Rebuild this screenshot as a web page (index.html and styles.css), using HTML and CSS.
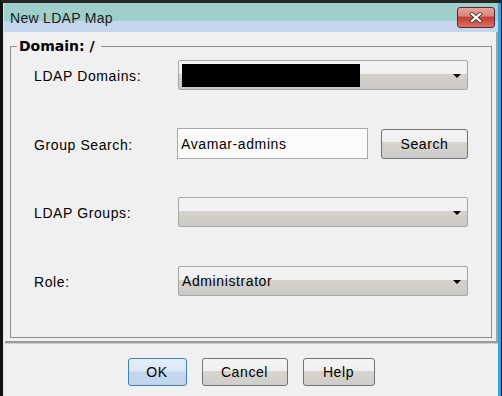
FILE: index.html
```html
<!DOCTYPE html>
<html lang="en">
<head>
    <meta charset="UTF-8">
    <title>New LDAP Map</title>
    <link rel="stylesheet" href="styles.css">
</head>
<body>
    <div class="window">
        <div class="frame">
            <div class="titlebar">
                <span class="title">New LDAP Map</span>
                <div class="close">
                    <svg width="14" height="11" viewBox="0 0 14 11">
                        <path d="M3 2 L11 9 M11 2 L3 9" stroke="#5a3a3a" stroke-width="4" stroke-linecap="square"/>
                        <path d="M3 2 L11 9 M11 2 L3 9" stroke="#ffffff" stroke-width="2.2" stroke-linecap="square"/>
                    </svg>
                </div>
            </div>

            <div class="panel">
                <fieldset class="group">
                    <legend>Domain: /</legend>
                    <div class="form">
                        <span class="label">LDAP Domains:</span>
                        <div class="combo">
                            <span class="redacted"></span>
                            <span class="arrow"></span>
                        </div>

                        <span class="label">Group Search:</span>
                        <div class="search-row">
                            <div class="field">Avamar-admins</div>
                            <div class="btn btn-search">Search</div>
                        </div>

                        <span class="label">LDAP Groups:</span>
                        <div class="combo">
                            <span class="arrow"></span>
                        </div>

                        <span class="label">Role:</span>
                        <div class="combo">
                            <span class="combo-text">Administrator</span>
                            <span class="arrow"></span>
                        </div>
                    </div>
                </fieldset>
            </div>

            <div class="actions">
                <div class="btn btn-ok">OK</div>
                <div class="btn btn-cancel">Cancel</div>
                <div class="btn btn-help">Help</div>
            </div>
        </div>
    </div>
</body>
</html>
```

FILE: styles.css
```css
* {
    box-sizing: border-box;
}

body {
    margin: 0;
    background-color: #111;
    font-family: 'Liberation Sans', Arial, sans-serif;
    font-size: 14px;
    color: #000;
}

.window {
    width: 502px;
    height: 396px;
    border-top: 3px solid #262626;
    border-left: 3px solid #111;
    border-right: 1px solid #111;
    display: flex;
    flex-direction: column;
}

.frame {
    flex: 1;
    display: flex;
    flex-direction: column;
    background-color: #f0f0f0;
    border-left: 1px solid #d9e4f2;
    border-right: 3px solid #3aa0da;
}

/* title bar */
.titlebar {
    height: 29px;
    display: flex;
    justify-content: space-between;
    padding-left: 6px;
    background: linear-gradient(#9ecfcb 0, #9ecfcb 18px, #c5d5ee 18px, #c5d5ee 100%);
}

.title {
    align-self: center;
    font-size: 14px;
    letter-spacing: 0.3px;
    color: #1a1a1a;
}

.close {
    width: 38px;
    height: 21px;
    margin-top: 4px;
    margin-right: 3px;
    border: 1px solid #5a2a38;
    border-radius: 3px;
    background: linear-gradient(#eaa59b 0%, #d9877c 40%, #c4463b 50%, #c9493e 62%, #d87163 100%);
    display: flex;
    align-items: center;
    justify-content: center;
}

/* main panel */
.panel {
    height: 311px;
    margin-left: 1px;
    padding: 6px 4px 3px 5px;
    border-right: 2px solid #a3a3a3;
    border-bottom: 2px solid #9b9b9b;
    box-shadow: 0 1px 0 #cfcfcf;
    display: flex;
    flex-direction: column;
}

.group {
    flex: 1;
    margin: 0;
    padding: 6px 23px 0 6px;
    border: 1px solid #8e8e8e;
}

.group legend {
    padding: 0 6px 0 2px;
    font-family: 'DejaVu Sans', sans-serif;
    font-weight: bold;
    font-size: 14px;
    line-height: 16px;
}

.form {
    margin-left: 17px;
    display: grid;
    grid-template-columns: 144px 1fr;
    grid-auto-rows: 30px;
    row-gap: 38.7px;
    align-items: center;
}

.label {
    letter-spacing: 0.6px;
    padding-top: 2px;
}

.combo {
    position: relative;
    height: 30px;
    border: 1px solid #a7a7a7;
    border-radius: 2px;
    background: linear-gradient(#f3f3f3 0, #f1f1f1 13px, #d6d2cb 13px, #cfcdca 22px, #c9c9c9 100%);
    display: flex;
    align-items: center;
    padding-left: 3px;
}

.redacted {
    width: 178px;
    height: 23px;
    background-color: #000;
}

.combo-text {
    letter-spacing: 0.6px;
}

.arrow {
    position: absolute;
    right: 6px;
    top: 13px;
    width: 0;
    height: 0;
    border-left: 4px solid transparent;
    border-right: 4px solid transparent;
    border-top: 4px solid #000;
}

.search-row {
    display: flex;
    justify-content: space-between;
    align-items: center;
}

.field {
    width: 191px;
    height: 31px;
    margin-left: -1px;
    padding-left: 3px;
    border: 1px solid #a9a9a9;
    background-color: #fbfbfb;
    display: flex;
    align-items: center;
    letter-spacing: 0.6px;
}

/* buttons */
.btn {
    height: 28px;
    border: 1px solid #727272;
    border-radius: 3px;
    background: linear-gradient(#f4f4f4 0, #efefef 12px, #d9d5ce 12px, #d3d0cb 20px, #cdcdcd 100%);
    display: flex;
    align-items: center;
    justify-content: center;
    letter-spacing: 0.6px;
}

.btn-search {
    width: 87px;
    height: 30px;
}

.actions {
    flex: 1;
    display: flex;
    justify-content: center;
    gap: 15px;
    padding-top: 15px;
}

.btn-ok {
    width: 59px;
    border-color: #3e7fb4;
    background: linear-gradient(#e6eff9 0, #dae6f5 12px, #c5d7ee 13px, #c1d4ed 100%);
}

.btn-cancel {
    width: 86px;
}

.btn-help {
    width: 72px;
}
```
